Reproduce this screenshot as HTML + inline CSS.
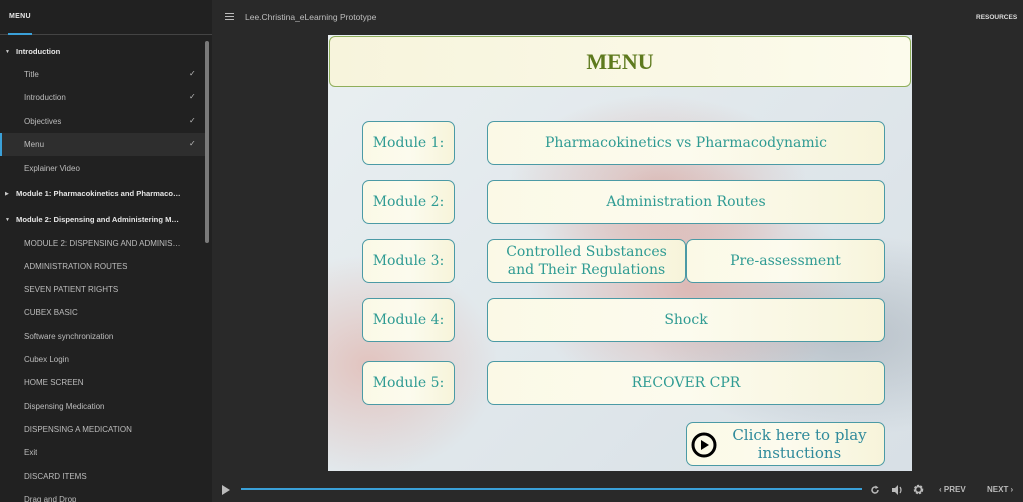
<!DOCTYPE html>
<html><head><meta charset="utf-8"><style>
*{margin:0;padding:0;box-sizing:border-box}
body{width:1023px;height:502px;overflow:hidden;background:#292929;font-family:"Liberation Sans",sans-serif;position:relative}
#side{position:absolute;left:0;top:0;width:212px;height:502px;background:#212121;overflow:hidden}
.menuh{position:absolute;left:9px;top:13px;color:#e8e8e8;font-size:7px;font-weight:bold;letter-spacing:.3px}
.tabline{position:absolute;left:0;top:34px;width:212px;height:1px;background:#444}
.tabsel{position:absolute;left:8px;top:33px;width:24px;height:2px;background:#3aa0d8}
.it{position:absolute;left:24px;color:#bdbdbd;font-size:8px;white-space:nowrap;max-width:160px;overflow:hidden;text-overflow:ellipsis}
.sec{position:absolute;left:16px;color:#e6e6e6;font-size:7.6px;font-weight:bold;white-space:nowrap;max-width:167px;overflow:hidden;text-overflow:ellipsis}
.ar{position:absolute;left:5px;color:#ccc;font-size:5px}
.ck{position:absolute;left:189px;color:#bbb;font-size:8px}
.sel{position:absolute;left:0;top:133px;width:205px;height:23px;background:#2e2e2e;border-left:2px solid #3aa0d8}
.sb{position:absolute;left:205px;top:41px;width:4px;height:202px;background:#7a7a7a;border-radius:2px}
.title{position:absolute;left:245px;top:12px;color:#bfbfbf;font-size:8.5px}
.ham{position:absolute;left:225px;top:13px;width:9px;height:7px;border-top:1.5px solid #bbb;border-bottom:1.5px solid #bbb}
.ham:after{content:"";position:absolute;left:0;top:1.5px;width:9px;height:1.5px;background:#bbb}
.res{position:absolute;left:976px;top:14px;color:#ddd;font-size:6.5px;font-weight:bold}
#slide{position:absolute;left:328px;top:35px;width:584px;height:436px;overflow:hidden;
background:radial-gradient(ellipse 160px 120px at 360px 250px,rgba(220,150,140,.55),transparent),
radial-gradient(ellipse 130px 110px at 40px 330px,rgba(225,170,160,.6),transparent),
radial-gradient(ellipse 150px 90px at 330px 150px,rgba(215,150,140,.5),transparent),
radial-gradient(ellipse 200px 100px at 520px 300px,rgba(150,160,170,.5),transparent),
linear-gradient(135deg,#e9eff1,#d8e0e6)}
.hdr{position:absolute;left:1px;top:1px;width:582px;height:51px;border:1px solid #8fae5a;border-radius:6px;background:linear-gradient(90deg,#f7f4dc,#fcfbec);text-align:center;font-family:"Liberation Serif",serif;font-weight:bold;font-size:22px;color:#5e7a1e;line-height:50px}
.b{position:absolute;border:1px solid #4b9aa5;border-radius:7px;background:linear-gradient(90deg,#fbf9e6,#fcfbee 50%,#f7f4da);color:#2f9b93;font-family:"DejaVu Serif",serif;font-size:14px;display:flex;align-items:center;justify-content:center;text-align:center;line-height:18px}
#bar .pl{position:absolute;left:222px;top:485px;width:0;height:0;border-left:8px solid #bbb;border-top:5px solid transparent;border-bottom:5px solid transparent}
.prog{position:absolute;left:241px;top:488px;width:621px;height:2px;background:#3aa0d8}
.ctl{position:absolute;top:485px;color:#bbb;font-size:8px;font-weight:bold}
</style></head><body>
<div id="side">
<div class="menuh">MENU</div><div class="tabline"></div><div class="tabsel"></div>
<div class="sel"></div>
<div class="ar" style="top:49px">▼</div><div class="sec" style="top:47px">Introduction</div>
<div class="it" style="top:70px">Title</div><div class="ck" style="top:69px">✓</div>
<div class="it" style="top:93px">Introduction</div><div class="ck" style="top:92px">✓</div>
<div class="it" style="top:117px">Objectives</div><div class="ck" style="top:116px">✓</div>
<div class="it" style="top:140px">Menu</div><div class="ck" style="top:139px">✓</div>
<div class="it" style="top:164px">Explainer Video</div>
<div class="ar" style="top:191px">▶</div><div class="sec" style="top:189px">Module 1: Pharmacokinetics and Pharmacodynamics</div>
<div class="ar" style="top:217px">▼</div><div class="sec" style="top:215px">Module 2: Dispensing and Administering Medications</div>
<div class="it" style="top:239px">MODULE 2: DISPENSING AND ADMINISTERING</div>
<div class="it" style="top:262px">ADMINISTRATION ROUTES</div>
<div class="it" style="top:285px">SEVEN PATIENT RIGHTS</div>
<div class="it" style="top:308px">CUBEX BASIC</div>
<div class="it" style="top:332px">Software synchronization</div>
<div class="it" style="top:355px">Cubex Login</div>
<div class="it" style="top:378px">HOME SCREEN</div>
<div class="it" style="top:402px">Dispensing Medication</div>
<div class="it" style="top:425px">DISPENSING A MEDICATION</div>
<div class="it" style="top:448px">Exit</div>
<div class="it" style="top:472px">DISCARD ITEMS</div>
<div class="it" style="top:495px">Drag and Drop</div>
<div class="sb"></div>
</div>
<div class="ham"></div>
<div class="title">Lee.Christina_eLearning Prototype</div>
<div class="res">RESOURCES</div>
<div id="slide">
<div class="hdr">MENU</div>
<div class="b" style="left:34px;top:86px;width:93px;height:44px">Module 1:</div>
<div class="b" style="left:159px;top:86px;width:398px;height:44px">Pharmacokinetics vs Pharmacodynamic</div>
<div class="b" style="left:34px;top:145px;width:93px;height:44px">Module 2:</div>
<div class="b" style="left:159px;top:145px;width:398px;height:44px">Administration Routes</div>
<div class="b" style="left:34px;top:204px;width:93px;height:44px">Module 3:</div>
<div class="b" style="left:159px;top:204px;width:199px;height:44px">Controlled Substances<br>and Their Regulations</div>
<div class="b" style="left:358px;top:204px;width:199px;height:44px">Pre-assessment</div>
<div class="b" style="left:34px;top:263px;width:93px;height:44px">Module 4:</div>
<div class="b" style="left:159px;top:263px;width:398px;height:44px">Shock</div>
<div class="b" style="left:34px;top:326px;width:93px;height:44px">Module 5:</div>
<div class="b" style="left:159px;top:326px;width:398px;height:44px">RECOVER CPR</div>
<div class="b" style="left:358px;top:387px;width:199px;height:44px;color:#2f8a9b;font-size:15px;padding-left:28px">Click here to play<br>instuctions
<svg style="position:absolute;left:4px;top:9px" width="26" height="26" viewBox="0 0 26 26"><circle cx="13" cy="13" r="11" fill="none" stroke="#000" stroke-width="3"/><path d="M10 8 L18 13 L10 18Z" fill="#000"/></svg></div>
</div>
<div id="bar">
<div class="pl"></div><div class="prog"></div>
<svg style="position:absolute;left:870px;top:485px" width="10" height="10" viewBox="0 0 10 10"><path d="M8 5A3 3 0 1 1 6.5 2.4" fill="none" stroke="#bbb" stroke-width="1.5"/><path d="M5.5 0.5L8.5 2.5L5.5 4Z" fill="#bbb"/></svg>
<svg style="position:absolute;left:892px;top:485px" width="12" height="10" viewBox="0 0 12 10"><path d="M0 3H3L6 0V10L3 7H0Z" fill="#bbb"/><path d="M8 2Q10 5 8 8" fill="none" stroke="#bbb" stroke-width="1.2"/></svg>
<svg style="position:absolute;left:913px;top:484px" width="11" height="11" viewBox="0 0 11 11"><circle cx="5.5" cy="5.5" r="3.5" fill="none" stroke="#bbb" stroke-width="2.5" stroke-dasharray="2 1"/><circle cx="5.5" cy="5.5" r="3" fill="none" stroke="#bbb" stroke-width="1.5"/></svg>
<div class="ctl" style="left:939px">‹ PREV</div>
<div class="ctl" style="left:987px">NEXT ›</div>
</div>
</body></html>
